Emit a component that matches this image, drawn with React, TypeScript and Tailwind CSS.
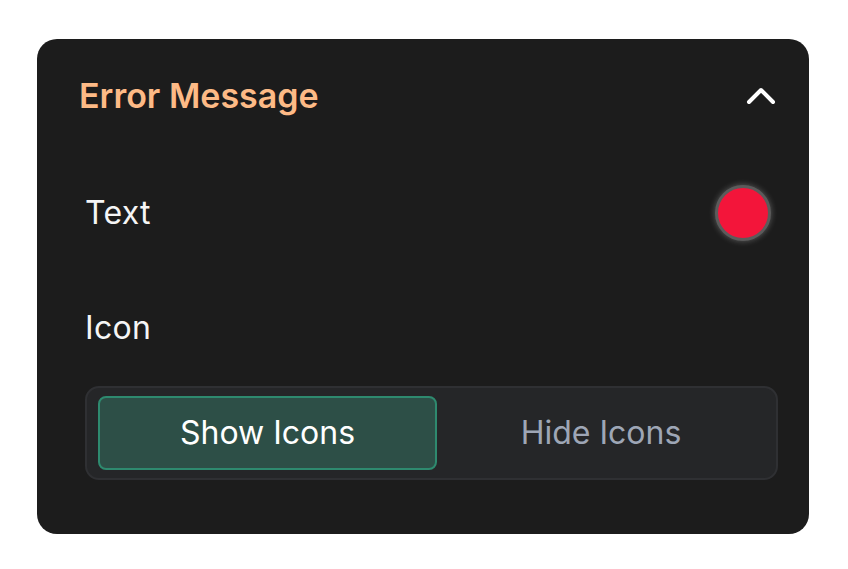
import React from "react";
import { ChevronUp } from "lucide-react";

const App = () => {
  return (
    <div className="min-h-screen bg-white pt-[39px] pl-[37px] font-['Inter',sans-serif]">
      <div className="w-[772px] h-[495px] rounded-[20px] bg-[#1c1c1c] pt-[33px]">
        <div className="flex items-center justify-between h-[48px] pl-[42px] pr-[24px]">
          <h2 className="text-[34px] leading-none font-semibold text-[#fdba86]">
            Error Message
          </h2>
          <ChevronUp size={48} strokeWidth={2} className="text-white" />
        </div>
        <div className="ml-[48px] mr-[31px]">
          <div className="flex items-center justify-between h-[60px] mt-[63px]">
            <span className="text-[32px] tracking-[0.3px] text-[#f5f5f5]">Text</span>
            <div className="w-[56px] h-[56px] mr-[7px] rounded-full bg-[#f3153a] border-[3px] border-[#5b5b5b] shadow-[0_0_6px_rgba(255,255,255,0.3)]" />
          </div>
          <div className="flex items-center h-[40px] mt-[65px]">
            <span className="text-[32px] tracking-[0.3px] text-[#f5f5f5]">Icon</span>
          </div>
          <div className="flex mt-[38px] h-[94px] rounded-[14px] border-2 border-[#2f3033] bg-[#252628] px-[11px] py-[8px]">
            <button className="w-[339px] rounded-[8px] border-2 border-[#2e8a6f] bg-[#2d4f47] text-[32px] text-white">
              Show Icons
            </button>
            <button className="flex-1 text-[32px] text-[#9ea6b6]">
              Hide Icons
            </button>
          </div>
        </div>
      </div>
    </div>
  );
};

export default App;
